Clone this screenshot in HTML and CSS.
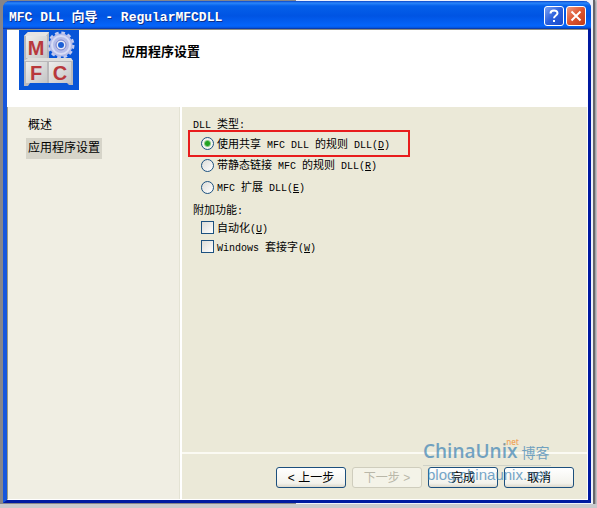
FILE: index.html
```
<!DOCTYPE html>
<html lang="zh-CN">

<head>
  <meta charset="UTF-8">
  <title>MFC DLL 向导 - RegularMFCDLL</title>
  <link rel="stylesheet" href="styles.css">
</head>

<body>

  <div class="desktop">
    <div class="window">
      <div class="title-bar">
        <div class="title"><span class="en">MFC DLL </span>向导<span class="en"> - RegularMFCDLL</span></div>
        <button class="title-button help" aria-label="帮助">
          <svg width="20" height="20" viewBox="0 0 20 20" fill="none" stroke="#fff" stroke-width="2">
            <path d="M6.5 7.5C6.5 3.5 13.5 3.5 13.5 7.3C13.5 9.5 10 9.6 10 12.2" />
            <path d="M10 14v2" />
          </svg>
        </button>
        <button class="title-button close" aria-label="关闭">
          <svg width="20" height="20" viewBox="0 0 20 20" fill="none" stroke="#fff" stroke-width="2">
            <path d="M5.5 5.5l9 9M14.5 5.5l-9 9" />
          </svg>
        </button>
      </div>

      <div class="header">
        <svg class="logo" width="60" height="60" viewBox="0 0 60 60">
          <defs>
            <linearGradient id="block" x1="0" y1="0" x2="1" y2="1">
              <stop offset="0" stop-color="#eeeeec" />
              <stop offset="1" stop-color="#c4c4c5" />
            </linearGradient>
          </defs>
          <rect width="60" height="60" fill="#0755d8" />
          <path d="M5 6L9 2H30V28H52L54 31V55H50L48 53H11L9 56H5Z" fill="#b9b8ba" />
          <path d="M5 6L9 2H30L27 6Z" fill="#e5e4e3" />
          <path d="M5 31L9 28H52L54 31Z" fill="#dededc" />
          <rect x="7" y="6" width="21" height="22" fill="url(#block)" />
          <rect x="7" y="32" width="21" height="21" fill="url(#block)" />
          <rect x="30" y="32" width="22" height="21" fill="url(#block)" />
          <circle cx="42" cy="15" r="12" fill="none" stroke="#c5cbee" stroke-width="3" stroke-dasharray="3.6 2.68" />
          <circle cx="42" cy="15" r="8" fill="none" stroke="#b4bbe8" stroke-width="7" />
          <circle cx="42" cy="15" r="9" fill="none" stroke="#d8dcf5" stroke-width="2" />
          <circle cx="42" cy="15" r="5" fill="#e8eaf8" stroke="#7b84c8" />
          <circle cx="42" cy="15" r="3" fill="#1c5fd6" />
          <g class="logo-letters">
            <text x="17" y="25">M</text>
            <text x="17" y="50">F</text>
            <text x="41" y="50">C</text>
          </g>
        </svg>
        <h1>应用程序设置</h1>
      </div>

      <div class="main">
        <ul class="sidebar">
          <li><a href="#">概述</a></li>
          <li><a href="#" class="active">应用程序设置</a></li>
        </ul>

        <form class="content">
          <div class="options">
            <fieldset>
              <legend><span class="en">DLL </span>类型<span class="en">:</span></legend>
              <label class="option radio highlight">
                <input type="radio" name="dllType" checked>
                <span>使用共享<span class="en"> MFC DLL </span>的规则<span class="en"> DLL(<u>D</u>)</span></span>
              </label>
              <label class="option radio">
                <input type="radio" name="dllType">
                <span>带静态链接<span class="en"> MFC </span>的规则<span class="en"> DLL(<u>R</u>)</span></span>
              </label>
              <label class="option radio">
                <input type="radio" name="dllType">
                <span><span class="en">MFC </span>扩展<span class="en"> DLL(<u>E</u>)</span></span>
              </label>
            </fieldset>
            <fieldset>
              <legend>附加功能<span class="en">:</span></legend>
              <label class="option">
                <input type="checkbox">
                <span>自动化<span class="en">(<u>U</u>)</span></span>
              </label>
              <label class="option">
                <input type="checkbox">
                <span><span class="en">Windows </span>套接字<span class="en">(<u>W</u>)</span></span>
              </label>
            </fieldset>
          </div>

          <div class="button-group">
            <button type="button">&lt; 上一步</button>
            <button type="button" disabled>下一步 &gt;</button>
            <button type="button">完成</button>
            <button type="button">取消</button>
            <div class="watermark">
              <div class="brand">ChinaUnix<span class="brand-cn">博客</span><span class="net">.net</span></div>
              <div class="site">blog.chinaunix.net</div>
            </div>
          </div>
        </form>
      </div>
    </div>
  </div>

</body>

</html>
```
FILE: styles.css
```
* {
  box-sizing: border-box;
}

body {
  margin: 0;
  font-family: "Liberation Sans", "Noto Sans CJK SC", sans-serif;
  font-size: 12px;
  color: #000;
  background: #c9c9cc;
}

/* strip of the screen behind the dialog and its shadow */
.desktop {
  display: flex;
  min-height: calc(100vh - 4px);
  margin-right: 2px;
  padding: 1px 2px 1px 3px;
  background: linear-gradient(to right, #85858a 50%, #eef1fa 50%);
  border-right: 2px solid #66666c;
  box-shadow: 0 1px 2px #55505c;
}

.window {
  flex: 1;
  display: flex;
  flex-direction: column;
  background: #fff;
  border: 4px solid #0a3fd0;
  border-color: #0a3fd0 #0019a0 #0019a0 #1656dc;
  border-top: 0;
  border-right-width: 3px;
  border-bottom-width: 3px;
  border-radius: 7px 7px 0 0;
}

.title-bar {
  display: flex;
  align-items: center;
  gap: 2px;
  height: 28px;
  margin: 0 -3px 0 -4px;
  padding: 2px 5px 0 6px;
  background: linear-gradient(#0a46c8 0, #2a86fb 2px, #0560ea 5px, #0054e3 15px, #0565fb 25px, #0348c8 28px);
  border-bottom: 1px solid #0a3db0;
  border-radius: 7px 7px 0 0;
}

.title {
  flex: 1;
  font-size: 13px;
  font-weight: bold;
  color: #fff;
  text-shadow: 1px 1px #0b2f8c;
  white-space: nowrap;
}

.en {
  font-family: "Liberation Mono", monospace;
  font-size: 10px;
  line-height: 1;
  white-space: pre;
}

.title .en {
  font-size: 13px;
}

.title-button {
  width: 20px;
  height: 20px;
  padding: 0;
  border: 1px solid #fff;
  border-radius: 3px;
}

.title-button svg {
  display: block;
  margin: -1px;
}

.help {
  background: linear-gradient(135deg, #7ba2f2, #2b5fdc 50%, #1b4bcb);
}

.close {
  background: linear-gradient(135deg, #ee9a80, #dd5530 50%, #c23b16);
}

.header {
  display: flex;
  height: 78px;
  padding-left: 12px;
  border-top: 1px solid #8d8d82;
}

.logo-letters {
  font: bold 20px "Liberation Sans", sans-serif;
  fill: #b8383c;
  text-anchor: middle;
}

h1 {
  margin: 12px 0 0 43px;
  font-size: 13px;
  line-height: 20px;
}

.main {
  flex: 1;
  display: flex;
  margin-right: 1px;
  border-left: 1px solid #9a9a84;
  border-bottom: 1px solid #fff;
}

.sidebar {
  width: 172px;
  margin: 0;
  padding: 8px 18px;
  list-style: none;
  background: #f0eee3;
  border-right: 1px solid #e4e3d4;
}

.sidebar a {
  display: inline-block;
  padding: 0 2px;
  line-height: 21px;
  color: #000;
  text-decoration: none;
}

.sidebar li {
  height: 23px;
}

.sidebar .active {
  background: #d6d4c9;
}

.content {
  flex: 1;
  display: flex;
  flex-direction: column;
  margin-left: 2px;
  background: #ebe9d8;
  font-size: 11px;
}

.options {
  flex: 1;
  padding: 9px 11px;
}

fieldset {
  margin: 0 0 4px;
  padding: 0;
  border: 0;
}

legend {
  padding: 0;
  line-height: 16px;
}

.option {
  display: flex;
  align-items: center;
  gap: 3px;
  height: 19px;
  padding-left: 8px;
  line-height: 16px;
}

.radio {
  height: 22px;
}

.highlight {
  width: 222px;
  height: 27px;
  margin: -2px 0 -3px -5px;
  padding-left: 11px;
  border: 2px solid #e81c1c;
}

input {
  appearance: none;
  width: 13px;
  height: 13px;
  margin: 0;
  background: linear-gradient(135deg, #dcdcd7, #fff);
  border: 1px solid #1c5180;
}

input[type="radio"] {
  border-radius: 50%;
}

input[type="radio"]:checked {
  background: radial-gradient(circle, #21a121 0 2px, #f3f3ef 4px);
}

.button-group {
  position: relative;
  display: flex;
  justify-content: flex-end;
  gap: 6px;
  padding: 13px 13px 11px;
  border-top: 2px solid #fbfaf3;
}

.button-group button {
  width: 70px;
  height: 21px;
  padding: 0;
  font-family: inherit;
  font-size: 12px;
  line-height: 18px;
  color: #000;
  background: linear-gradient(#fff, #f3f2ec 80%, #dcd8cb);
  border: 1px solid #1c4f7d;
  border-radius: 3px;
}

.button-group button:disabled {
  color: #b9b7a8;
  background: #f4f3e8;
  border-color: #cfcdbd;
}

/* site stamp over the bottom right corner */
.watermark {
  position: absolute;
  right: 36px;
  bottom: 15px;
  width: 128px;
  color: #3d83b5;
  opacity: 0.7;
  white-space: nowrap;
  pointer-events: none;
}

.brand {
  font-family: "Open Sans", "Noto Sans CJK SC", sans-serif;
  font-size: 19px;
  font-weight: 600;
  line-height: 24px;
  border-bottom: 1px solid #c3c7c0;
}

.brand-cn {
  margin-left: 4px;
  font-size: 14px;
  font-weight: normal;
}

.net {
  position: absolute;
  top: -3px;
  right: 32px;
  font-size: 8px;
  line-height: 12px;
  color: #f08a2c;
}

.site {
  padding-left: 4px;
  font-size: 15px;
  line-height: 18px;
}
```
